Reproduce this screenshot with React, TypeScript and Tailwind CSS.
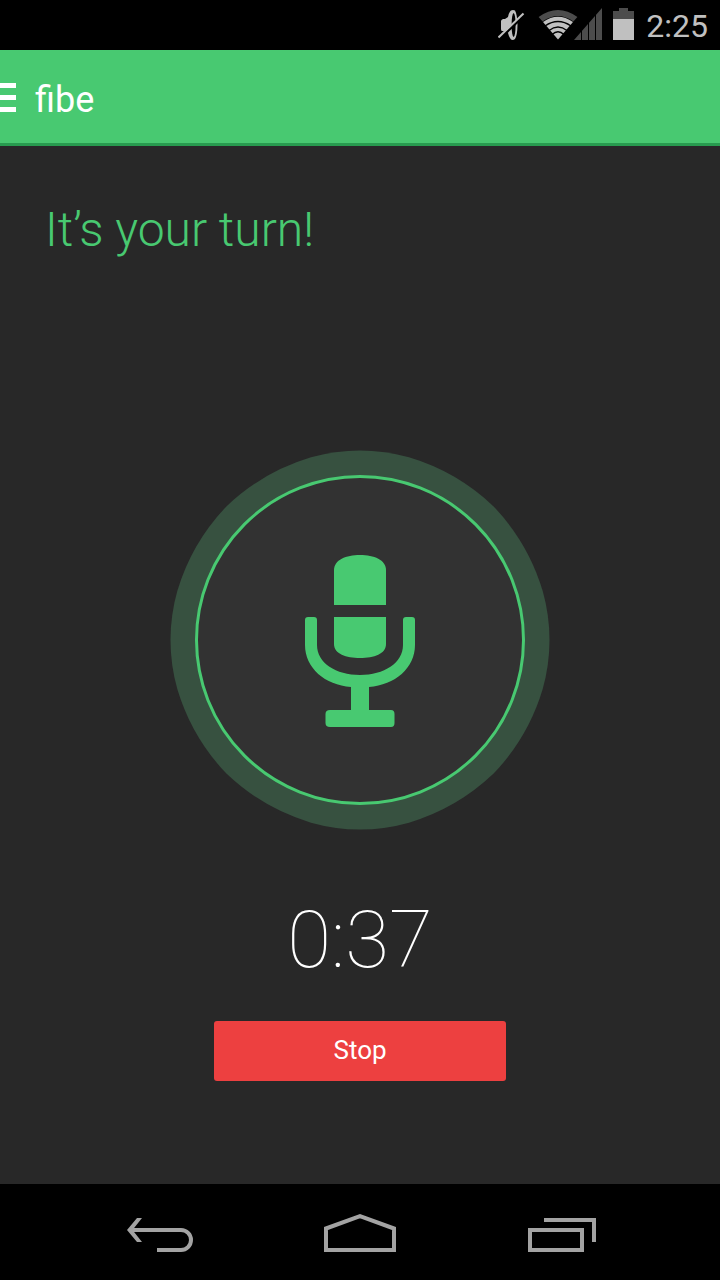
function MutedIcon() {
  return (
    <svg width="28" height="32" viewBox="0 0 28 32" aria-label="Muted" role="img">
      <path
        d="M3 13Q3 12 5 11H7L10 9Q11 4 13 2.5Q15 1.4 17 2.5Q19.4 7 19.5 17Q19.4 27 17 31Q15 32.5 13 31.5Q11 29 10 25L7 23H4Q3 23 3 21Z"
        fill="#c0c0c0"
      />
      <ellipse cx="15.6" cy="17" rx="2" ry="12" fill="#000" />
      <path d="M1.5 31L26.5 7" stroke="#000" strokeWidth="2.5" />
      <path d="M0.5 29.5L25.5 5.5" stroke="#c0c0c0" strokeWidth="2" />
    </svg>
  );
}

function WifiIcon() {
  return (
    <svg width="40" height="30" viewBox="0 0 40 30" aria-label="Wi-Fi" role="img">
      <path d="M0.6 7Q20 -7 39.4 7L35.4 11.5Q20 0.5 4.6 11.5Z" fill="#4c4c4c" />
      <path d="M5 12Q20 1.5 35 12L20 29.5Z" fill="#c0c0c0" />
      <path d="M7 16Q20 7 33 16M11 20.5Q20 13.5 29 20.5M14 24.5Q20 19 26 24.5" fill="none" stroke="#000" strokeWidth="1.3" />
    </svg>
  );
}

function SignalIcon() {
  return (
    <svg width="28" height="32" viewBox="0 0 28 32" aria-label="No signal" role="img">
      <path d="M0 32L28 0V32Z" fill="#4c4c4c" />
      <path d="M7.5 20V32M14.5 12V32M21.5 5V32" stroke="#000" strokeWidth="1" />
    </svg>
  );
}

function BatteryIcon() {
  return (
    <svg width="21" height="32" viewBox="0 0 21 32" aria-label="Battery" role="img">
      <path d="M0 3H6V0H15V3H21V11H0Z" fill="#4c4c4c" />
      <path d="M0 11H21V32H0Z" fill="#c0c0c0" />
    </svg>
  );
}

function MicrophoneIcon() {
  return (
    <svg width="110" height="172" viewBox="0 0 110 172" fill="#48c971" aria-hidden="true">
      <path d="M29 50V15C29 5 41 0 55 0S81 5 81 15V50Z" />
      <path d="M29 62H81V89C81 99 69 103 55 103S29 99 29 89Z" />
      <path d="M0 65Q0 62 3 62H9Q12 62 12 65V90C12 108 31 120 55 120S98 108 98 90V65Q98 62 101 62H107Q110 62 110 65V90C110 113 90 130 64 132V155H86Q89.500 155 89.500 159V168Q89.500 172 86 172H25Q20.500 172 20.500 168V159Q20.500 155 25 155H46V132C20 130 0 113 0 90Z" />
    </svg>
  );
}

const haloQuadrant = "M0 0V-189.5Q24.9 -189.5 49 -182.7Q97.2 -168.3 133.6 -133.6Q168.3 -97.2 182.7 -49Q189.5 -24.9 189.5 0Z";

function Microphone() {
  return (
    <div className="grid place-items-center">
      <svg width="380" height="380" viewBox="-190 -190 380 380" fill="#375140" className="col-start-1 row-start-1" aria-hidden="true">
        <path d={haloQuadrant} />
        <path d={haloQuadrant} transform="rotate(90)" />
        <path d={haloQuadrant} transform="rotate(180)" />
        <path d={haloQuadrant} transform="rotate(270)" />
      </svg>
      <div className="col-start-1 row-start-1 flex size-[330px] items-center justify-center rounded-full border-3 border-[#48c971] bg-[#323232] pt-0.5">
        <MicrophoneIcon />
      </div>
    </div>
  );
}

function StatusBar() {
  return (
    <div className="flex h-[50px] items-center justify-end gap-3 bg-black pr-3 text-[#c0c0c0]">
      <div className="flex items-end pb-0.5">
        <MutedIcon />
        <div className="ml-3">
          <WifiIcon />
        </div>
        <div className="-ml-1">
          <SignalIcon />
        </div>
        <div className="ml-[11px]">
          <BatteryIcon />
        </div>
      </div>
      <time className="pt-0.5 text-[32px] leading-12">2:25</time>
    </div>
  );
}

function Header() {
  return (
    <header className="flex h-24 items-center border-b-3 border-[#289b4f] bg-[#48c971] pt-0.5 text-white">
      <button type="button" aria-label="Open menu" className="flex w-4 flex-col gap-[7px]">
        <span className="h-[5px] bg-white" />
        <span className="h-[5px] bg-white" />
        <span className="h-[5px] bg-white" />
      </button>
      <span className="ml-[19px] pt-1 text-4xl">fibe</span>
    </header>
  );
}

function NavigationBar() {
  return (
    <nav className="flex h-24 items-center justify-center gap-32 bg-black">
      <button type="button" aria-label="Back">
        <svg width="76" height="40" viewBox="0 0 76 40" fill="none" stroke="#a3a3a3" strokeWidth="4">
          <path d="M10 18H61A10 10 0 0 1 61 38H37" />
          <path d="M7 18L17 6H22L12.5 18L22 30H17Z" fill="#a3a3a3" stroke="none" />
        </svg>
      </button>
      <button type="button" aria-label="Home">
        <svg width="72" height="40" viewBox="0 0 72 40" fill="none" stroke="#a3a3a3" strokeWidth="4">
          <path d="M2 16.5L36 4.2L70 16.5V38H2Z" />
        </svg>
      </button>
      <button type="button" aria-label="Recent apps">
        <svg width="76" height="40" viewBox="0 0 76 40" fill="none" stroke="#a3a3a3" strokeWidth="4">
          <path d="M6 18H58V38H6Z" />
          <path d="M20 8H70V30" />
        </svg>
      </button>
    </nav>
  );
}

export default function App() {
  return (
    <div className="flex min-h-screen flex-col bg-[#282828] font-['Roboto',sans-serif]">
      <StatusBar />
      <Header />
      <main className="flex flex-1 flex-col items-center">
        <h1 className="self-stretch px-[45px] pt-14 text-5xl leading-14 font-light text-[#48c971]">It’s your turn!</h1>
        <div className="mt-48">
          <Microphone />
        </div>
        <time className="mt-[62px] text-[80px] leading-[96px] font-thin text-white">0:37</time>
        <button type="button" className="mt-[33px] h-[60px] w-[292px] rounded-[3px] bg-[#ed4040] pb-0.5 text-[26px] text-white">
          Stop
        </button>
      </main>
      <NavigationBar />
    </div>
  );
}
